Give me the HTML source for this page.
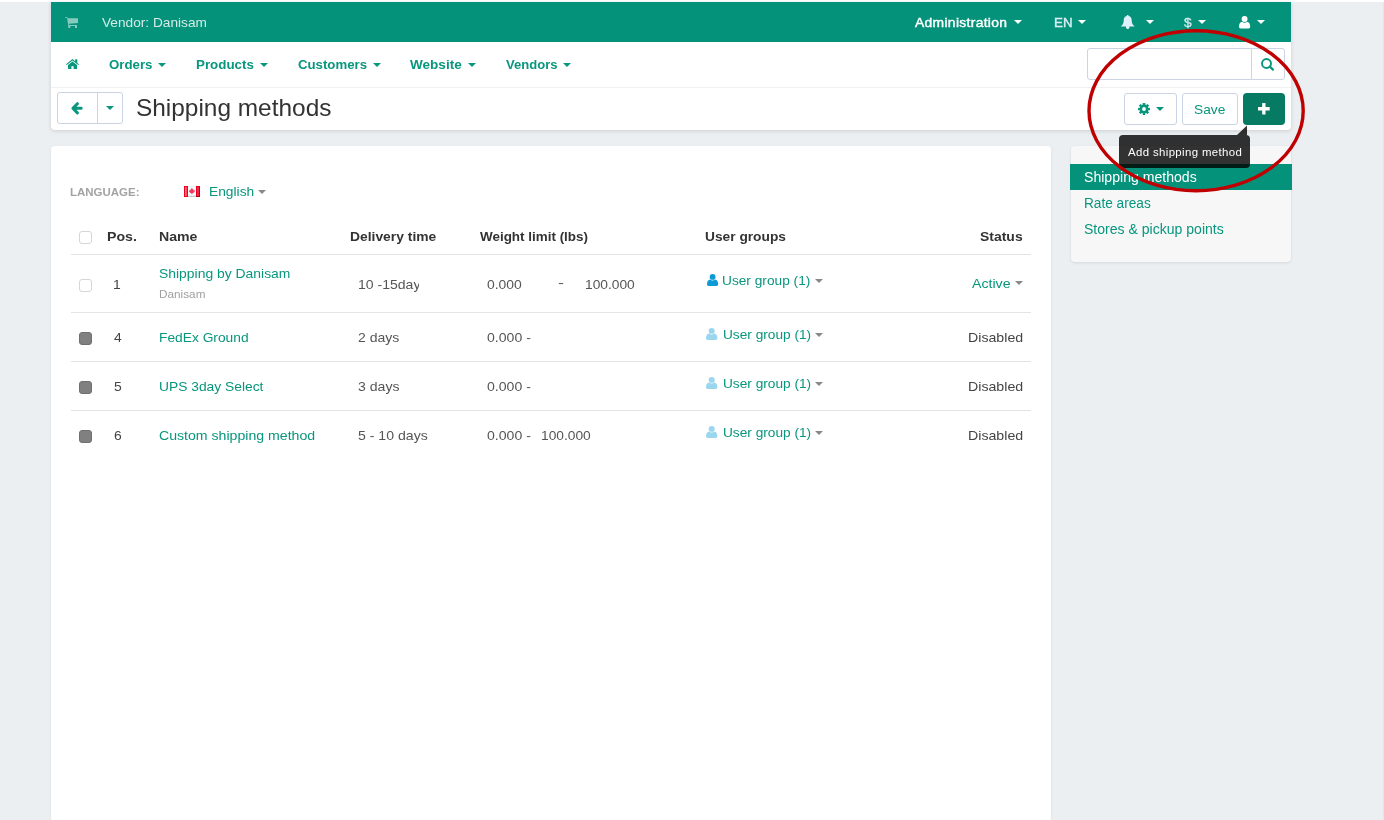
<!DOCTYPE html>
<html>
<head>
<meta charset="utf-8">
<title>Shipping methods</title>
<style>
*{box-sizing:border-box;margin:0;padding:0}
html,body{width:1384px;height:820px;overflow:hidden}
body{background:#ebeff2;font-family:"Liberation Sans",sans-serif;font-size:13px;color:#333;position:relative}
.abs{position:absolute}
.t{position:absolute;white-space:nowrap;line-height:1;transform-origin:0 50%}
#txt{position:absolute;left:0;top:0;width:1384px;height:820px;will-change:transform}
#topstrip{left:0;top:0;width:1384px;height:2px;background:#fff}
#rightstrip{left:1383px;top:2px;width:1px;height:818px;background:#e6e6e6}
#hdrwrap{left:51px;top:2px;width:1240px;height:128px;background:#fff;border-radius:0 0 4px 4px;box-shadow:0 1px 4px rgba(0,0,0,.13)}
#green{left:51px;top:2px;width:1240px;height:40px;background:#05927a}
#sep{left:51px;top:87px;width:1240px;height:1px;background:#f1f1f1}
.btn{position:absolute;background:#fff;border:1px solid #cad4e2;border-radius:3px}
.vsep{position:absolute;width:1px;background:#ccd6e3}
#main{left:51px;top:146px;width:1000px;height:700px;background:#fff;border-radius:4px;box-shadow:0 1px 3px rgba(0,0,0,.08)}
#side{left:1071px;top:146px;width:220px;height:116px;background:#f7f7f7;border-radius:4px;box-shadow:0 1px 3px rgba(0,0,0,.1)}
#sideact{left:1070px;top:164px;width:222px;height:26px;background:#05927a}
.hr{position:absolute;left:71px;width:960px;height:1px;background:#e4e4e4}
.cb{position:absolute;width:13px;height:13px;border-radius:3px}
.cb.off{background:#fff;border:1px solid #d6d6d6}
.cb.on{background:#808080;border:1px solid #707070}
svg{position:absolute;overflow:visible}
.car{position:absolute;width:0;height:0;border-left:4px solid transparent;border-right:4px solid transparent;border-top:4px solid #fff}
.car.g{border-top-color:#08967d}
.car.k{border-top-color:#888}
</style>
</head>
<body>
<div class="abs" id="topstrip"></div>
<div class="abs" id="rightstrip"></div>
<div class="abs" id="hdrwrap"></div>
<div class="abs" id="green"></div>
<div class="abs" id="sep"></div>

<!-- top bar icons -->
<svg id="cart" style="left:65px;top:17px" width="13" height="11" viewBox="0 0 13 11"><path d="M0 0.2 H2.4 L2.9 1.3 H13 V5.9 L4 6.7 L4.2 7.9 H12 V11 H10 V9 H5.3 V11 H3.3 V8.5 L2.1 1.1 H0 Z" fill="rgba(255,255,255,.52)"/></svg>
<div class="car" style="left:1014px;top:20px"></div>
<div class="car" style="left:1078px;top:20px"></div>
<svg id="bell" style="left:1121px;top:14.5px" width="13.4" height="14" viewBox="0 0 13.4 14"><path d="M6.7 0 C7.3 0 7.7 .4 7.7 1 C9.7 1.5 10.7 3.2 10.7 5.4 C10.7 8.4 11.9 9.8 13.4 11 V11.6 H0 V11 C1.5 9.8 2.7 8.4 2.7 5.4 C2.7 3.2 3.7 1.5 5.7 1 C5.7 .4 6.1 0 6.7 0 Z M5 11.5 H8.4 V12.2 C8.4 13.2 7.7 14 6.7 14 C5.7 14 5 13.2 5 12.2 Z" fill="#def0fb"/></svg>
<div class="car" style="left:1146px;top:20px"></div>
<div class="car" style="left:1198px;top:20px"></div>
<svg id="user" style="left:1238.9px;top:15.6px" width="11.2" height="12.4" viewBox="0 0 11.8 12.8" preserveAspectRatio="none"><circle cx="5.9" cy="3.1" r="3.1" fill="#fff"/><path d="M0 11 C0 8.2 1.2 6.2 3.2 5.9 C4 6.6 4.9 6.9 5.9 6.9 C6.9 6.9 7.8 6.6 8.6 5.9 C10.6 6.2 11.8 8.2 11.8 11 C11.8 12.1 11 12.8 10 12.8 H1.8 C.8 12.8 0 12.1 0 11 Z" fill="#fff"/></svg>
<div class="car" style="left:1257px;top:20px"></div>

<!-- menu icons -->
<svg id="home" style="left:66px;top:58.7px" width="13" height="10.1" viewBox="0 0 13 10.4" preserveAspectRatio="none"><path d="M6.5 0 L9.2 2.3 V.3 H11.3 V4.1 L13 5.5 L12.3 6.3 L6.5 1.5 L.7 6.3 L0 5.5 Z" fill="#08967d"/><path d="M6.5 2.5 L11 6.2 V10.4 H7.6 V7.4 H5.4 V10.4 H2 V6.2 Z" fill="#08967d"/></svg>
<div class="car g" style="left:158px;top:63.3px"></div>
<div class="car g" style="left:260px;top:63.3px"></div>
<div class="car g" style="left:373.2px;top:63.3px"></div>
<div class="car g" style="left:468.2px;top:63.3px"></div>
<div class="car g" style="left:563.3px;top:63.3px"></div>

<!-- search -->
<div class="btn" id="search" style="left:1087px;top:48px;width:198px;height:32px"></div>
<div class="vsep" style="left:1251px;top:49px;height:30px"></div>
<svg id="mag" style="left:1261.3px;top:58px" width="13.5" height="13" viewBox="0 0 13.5 13"><circle cx="5.5" cy="5.5" r="4.5" fill="none" stroke="#08967d" stroke-width="1.9"/><path d="M8.8 8.6 L11.9 11.6" stroke="#08967d" stroke-width="2.2" stroke-linecap="round"/></svg>

<!-- title row -->
<div class="btn" id="backgrp" style="left:57px;top:92px;width:66px;height:32px"></div>
<div class="vsep" style="left:97px;top:93px;height:30px"></div>
<svg id="arrow" style="left:71.4px;top:102.4px" width="11.8" height="12.6" viewBox="0 0 11.8 12.6"><path d="M6.4 1.7 L1.9 6.3 L6.4 10.9 M2.2 6.3 H10.2" fill="none" stroke="#08967d" stroke-width="3" stroke-linecap="round" stroke-linejoin="round"/></svg>
<div class="car g" style="left:106px;top:106px"></div>

<div class="btn" id="gearbtn" style="left:1124px;top:93px;width:53px;height:32px"></div>
<svg id="gear" style="left:1138.2px;top:102.9px" width="12" height="12" viewBox="-6.3 -6.3 12.6 12.6"><g fill="#08967d"><circle r="4.6"/><g id="teeth"><rect x="-1.35" y="-6.3" width="2.7" height="12.6" rx=".5"/><rect x="-1.35" y="-6.3" width="2.7" height="12.6" rx=".5" transform="rotate(45)"/><rect x="-1.35" y="-6.3" width="2.7" height="12.6" rx=".5" transform="rotate(90)"/><rect x="-1.35" y="-6.3" width="2.7" height="12.6" rx=".5" transform="rotate(135)"/></g></g><circle r="2" fill="#fff"/></svg>
<div class="car g" style="left:1156px;top:107px"></div>
<div class="btn" id="savebtn" style="left:1182px;top:93px;width:56px;height:32px"></div>
<div class="abs" id="plusbtn" style="left:1243px;top:93px;width:42px;height:32px;background:#067a63;border-radius:4px"></div>
<svg id="plus" style="left:1258.1px;top:103.1px" width="11.7" height="11.5" viewBox="0 0 12 12" preserveAspectRatio="none"><path d="M4.3 0 H7.7 V4.3 H12 V7.7 H7.7 V12 H4.3 V7.7 H0 V4.3 H4.3 Z" fill="#fff"/></svg>

<!-- panels -->
<div class="abs" id="main"></div>
<div class="abs" id="side"></div>
<div class="abs" id="sideact"></div>

<!-- language -->
<svg id="flag" style="left:184px;top:186px" width="16" height="11" viewBox="0 0 16 11" shape-rendering="crispEdges"><rect x="4" width="8" height="11" fill="#f8fbfb"/><rect x="4" y="0" width="8" height="1" fill="#f1f3f3"/><rect x="4" y="10" width="8" height="1" fill="#c9cbcb"/><rect x="4" y="9" width="8" height="1" fill="#ececec"/><rect width="4" height="11" fill="#f4001f"/><rect x="1" y="1" width="2" height="9" fill="#ff6b80"/><rect x="2" y="1" width="1" height="9" fill="#ff4d66"/><rect x="12" width="4" height="11" fill="#e4001c"/><rect x="13" y="1" width="2" height="9" fill="#f2254a"/><rect x="15" y="1" width="1" height="10" fill="#c40016"/><rect x="12" y="10" width="4" height="1" fill="#b80014"/><path shape-rendering="auto" d="M7.9 1.8 L8.7 3.3 L9.4 3.1 L9.3 4.4 L11 4.2 L10.6 5.8 L9 7.2 L8.2 7.4 L8.2 8.2 H7.6 L7.6 7.4 L6.8 7.2 L5.2 5.8 L4.9 4.2 L6.5 4.4 L6.4 3.1 L7.1 3.3 Z" fill="#f2385a"/></svg>
<div class="car k" style="left:258px;top:190px"></div>

<!-- table chrome -->
<div class="cb off" style="left:79px;top:231px"></div>
<div class="hr" style="top:254px"></div>
<div class="hr" style="top:312px"></div>
<div class="hr" style="top:361px"></div>
<div class="hr" style="top:410px"></div>
<div class="cb off" style="left:79px;top:279px"></div>
<div class="cb on" style="left:79px;top:332px"></div>
<div class="cb on" style="left:79px;top:381px"></div>
<div class="cb on" style="left:79px;top:430px"></div>

<!-- user group icons + carets -->
<svg class="ug" style="left:706.9px;top:274px" width="11.2" height="12" viewBox="0 0 11.8 12.8" preserveAspectRatio="none"><circle cx="5.9" cy="3.1" r="3.1" fill="#0d9ad6"/><path d="M0 11 C0 8.2 1.2 6.2 3.2 5.9 C4 6.6 4.9 6.9 5.9 6.9 C6.9 6.9 7.8 6.6 8.6 5.9 C10.6 6.2 11.8 8.2 11.8 11 C11.8 12.1 11 12.8 10 12.8 H1.8 C.8 12.8 0 12.1 0 11 Z" fill="#0d9ad6"/></svg>
<svg class="ug" style="left:706.4px;top:328.1px" width="11.4" height="11.9" viewBox="0 0 11.8 12.8" preserveAspectRatio="none"><circle cx="5.9" cy="3.1" r="3.1" fill="#9ad6ee"/><path d="M0 11 C0 8.2 1.2 6.2 3.2 5.9 C4 6.6 4.9 6.9 5.9 6.9 C6.9 6.9 7.8 6.6 8.6 5.9 C10.6 6.2 11.8 8.2 11.8 11 C11.8 12.1 11 12.8 10 12.8 H1.8 C.8 12.8 0 12.1 0 11 Z" fill="#9ad6ee"/></svg>
<svg class="ug" style="left:706.4px;top:377.1px" width="11.4" height="11.9" viewBox="0 0 11.8 12.8" preserveAspectRatio="none"><circle cx="5.9" cy="3.1" r="3.1" fill="#9ad6ee"/><path d="M0 11 C0 8.2 1.2 6.2 3.2 5.9 C4 6.6 4.9 6.9 5.9 6.9 C6.9 6.9 7.8 6.6 8.6 5.9 C10.6 6.2 11.8 8.2 11.8 11 C11.8 12.1 11 12.8 10 12.8 H1.8 C.8 12.8 0 12.1 0 11 Z" fill="#9ad6ee"/></svg>
<svg class="ug" style="left:706.4px;top:426.1px" width="11.4" height="11.9" viewBox="0 0 11.8 12.8" preserveAspectRatio="none"><circle cx="5.9" cy="3.1" r="3.1" fill="#9ad6ee"/><path d="M0 11 C0 8.2 1.2 6.2 3.2 5.9 C4 6.6 4.9 6.9 5.9 6.9 C6.9 6.9 7.8 6.6 8.6 5.9 C10.6 6.2 11.8 8.2 11.8 11 C11.8 12.1 11 12.8 10 12.8 H1.8 C.8 12.8 0 12.1 0 11 Z" fill="#9ad6ee"/></svg>
<div class="car k" style="left:815.2px;top:279px"></div>
<div class="car k" style="left:814.9px;top:333px"></div>
<div class="car k" style="left:814.9px;top:382px"></div>
<div class="car k" style="left:814.9px;top:431px"></div>
<div class="car k" style="left:1015.2px;top:281px"></div>

<!-- tooltip bg -->
<div class="abs" id="tip" style="left:1119px;top:135px;width:131px;height:33px;background:rgba(0,0,0,.8);border-radius:4px"></div>
<svg id="tiparrow" style="left:1237px;top:125px" width="10" height="10"><path d="M0 10 L10 0.5 L10 10 Z" fill="rgba(0,0,0,.8)"/></svg>

<div id="txt">
<div class="t" id="vendor" style="left:102.00px;top:16px;font-size:13.5px;color:#d4ece7;transform:scaleX(1.0129);">Vendor: Danisam</div>
<div class="t" id="admin" style="left:915.00px;top:16px;font-size:13px;color:#fff;transform:scaleX(1.0665);-webkit-text-stroke:.4px #fff;letter-spacing:.3px">Administration</div>
<div class="t" id="en" style="left:1054.00px;top:16px;font-size:13px;color:#dceff6;transform:scaleX(1.0253);-webkit-text-stroke:.35px #dceff6">EN</div>
<div class="t" id="dollar" style="left:1184.00px;top:16px;font-size:13px;color:#d5edf0;transform:scaleX(1.0487);-webkit-text-stroke:.3px #d5edf0">$</div>
<div class="t" id="m1" style="left:109.00px;top:58px;font-size:13px;color:#08967d;transform:scaleX(1.0203);font-weight:bold;">Orders</div>
<div class="t" id="m2" style="left:196.00px;top:58px;font-size:13px;color:#08967d;transform:scaleX(1.0259);font-weight:bold;">Products</div>
<div class="t" id="m3" style="left:298.00px;top:58px;font-size:13px;color:#08967d;transform:scaleX(1.0158);font-weight:bold;">Customers</div>
<div class="t" id="m4" style="left:410.00px;top:58px;font-size:13px;color:#08967d;transform:scaleX(1.0424);font-weight:bold;">Website</div>
<div class="t" id="m5" style="left:506.00px;top:58px;font-size:13px;color:#08967d;transform:scaleX(1.0035);font-weight:bold;">Vendors</div>
<div class="t" id="title" style="left:136.00px;top:96px;font-size:24px;color:#333;transform:scaleX(1.0171);">Shipping methods</div>
<div class="t" id="save" style="left:1194.00px;top:103px;font-size:13.5px;color:#08967d;transform:scaleX(1.0170);">Save</div>
<div class="t" id="s1" style="left:1084.00px;top:170px;font-size:14px;color:#fff;transform:scaleX(1.0058);">Shipping methods</div>
<div class="t" id="s2" style="left:1084.00px;top:196px;font-size:14px;color:#08967d;transform:scaleX(0.9742);">Rate areas</div>
<div class="t" id="s3" style="left:1084.00px;top:222px;font-size:14px;color:#08967d;transform:scaleX(1.0033);">Stores &amp; pickup points</div>
<div class="t" id="lang" style="left:70.00px;top:187px;font-size:11px;color:#a3a3a3;transform:scaleX(1.0426);font-weight:bold;">LANGUAGE:</div>
<div class="t" id="english" style="left:209.00px;top:185px;font-size:13.5px;color:#08967d;transform:scaleX(1.0204);">English</div>
<div class="t" id="h1" style="left:107.00px;top:230px;font-size:13px;color:#333;transform:scaleX(1.0873);font-weight:bold;">Pos.</div>
<div class="t" id="h2" style="left:159.00px;top:230px;font-size:13px;color:#333;transform:scaleX(1.0867);font-weight:bold;">Name</div>
<div class="t" id="h3" style="left:350.00px;top:230px;font-size:13px;color:#333;transform:scaleX(1.0657);font-weight:bold;">Delivery time</div>
<div class="t" id="h4" style="left:480.00px;top:230px;font-size:13px;color:#333;transform:scaleX(1.0338);font-weight:bold;">Weight limit (lbs)</div>
<div class="t" id="h5" style="left:705.00px;top:230px;font-size:13px;color:#333;transform:scaleX(1.0572);font-weight:bold;">User groups</div>
<div class="t" id="h6" style="left:980.00px;top:230px;font-size:13px;color:#333;transform:scaleX(1.0733);font-weight:bold;">Status</div>
<div class="t" id="r1p" style="left:113.00px;top:278px;font-size:13px;color:#444;transform:scaleX(1.0700);">1</div>
<div class="t" id="r1n" style="left:159.00px;top:267px;font-size:13px;color:#08967d;transform:scaleX(1.0696);">Shipping by Danisam</div>
<div class="t" id="r1v" style="left:159.00px;top:289px;font-size:11px;color:#a0a0a0;transform:scaleX(1.0701);">Danisam</div>
<div class="t" id="r1d" style="left:358.00px;top:278px;font-size:13px;color:#555;transform:scaleX(1.0799);">10 -15day</div>
<div class="t" id="r1w1" style="left:487.00px;top:278px;font-size:13px;color:#555;transform:scaleX(1.0692);">0.000</div>
<div class="t" id="r1w2" style="left:558.00px;top:276px;font-size:13px;color:#555;transform:scaleX(1.3818);">-</div>
<div class="t" id="r1w3" style="left:585.00px;top:278px;font-size:13px;color:#555;transform:scaleX(1.0594);">100.000</div>
<div class="t" id="r1u" style="left:722.00px;top:274px;font-size:13px;color:#08967d;transform:scaleX(1.0537);">User group (1)</div>
<div class="t" id="r1s" style="left:972.00px;top:277px;font-size:13px;color:#08967d;transform:scaleX(1.0898);">Active</div>
<div class="t" id="r2p" style="left:114.00px;top:331px;font-size:13px;color:#444;transform:scaleX(1.0700);">4</div>
<div class="t" id="r2n" style="left:159.00px;top:331px;font-size:13px;color:#08967d;transform:scaleX(1.0596);">FedEx Ground</div>
<div class="t" id="r2d" style="left:358.00px;top:331px;font-size:13px;color:#555;transform:scaleX(1.0786);">2 days</div>
<div class="t" id="r2w1" style="left:487.00px;top:331px;font-size:13px;color:#555;transform:scaleX(1.0828);">0.000 -</div>
<div class="t" id="r2u" style="left:723.00px;top:328px;font-size:13px;color:#08967d;transform:scaleX(1.0516);">User group (1)</div>
<div class="t" id="r2s" style="left:968.00px;top:331px;font-size:13px;color:#444;transform:scaleX(1.0900);">Disabled</div>
<div class="t" id="r3p" style="left:114.00px;top:380px;font-size:13px;color:#444;transform:scaleX(1.0700);">5</div>
<div class="t" id="r3n" style="left:159.00px;top:380px;font-size:13px;color:#08967d;transform:scaleX(1.0628);">UPS 3day Select</div>
<div class="t" id="r3d" style="left:358.00px;top:380px;font-size:13px;color:#555;transform:scaleX(1.0830);">3 days</div>
<div class="t" id="r3w1" style="left:487.00px;top:380px;font-size:13px;color:#555;transform:scaleX(1.0828);">0.000 -</div>
<div class="t" id="r3u" style="left:723.00px;top:377px;font-size:13px;color:#08967d;transform:scaleX(1.0516);">User group (1)</div>
<div class="t" id="r3s" style="left:968.00px;top:380px;font-size:13px;color:#444;transform:scaleX(1.0900);">Disabled</div>
<div class="t" id="r4p" style="left:114.00px;top:429px;font-size:13px;color:#444;transform:scaleX(1.0700);">6</div>
<div class="t" id="r4n" style="left:159.00px;top:429px;font-size:13px;color:#08967d;transform:scaleX(1.0858);">Custom shipping method</div>
<div class="t" id="r4d" style="left:358.00px;top:429px;font-size:13px;color:#555;transform:scaleX(1.0842);">5 - 10 days</div>
<div class="t" id="r4w1" style="left:487.00px;top:429px;font-size:13px;color:#555;transform:scaleX(1.0828);">0.000 -</div>
<div class="t" id="r4u" style="left:723.00px;top:426px;font-size:13px;color:#08967d;transform:scaleX(1.0516);">User group (1)</div>
<div class="t" id="r4s" style="left:968.00px;top:429px;font-size:13px;color:#444;transform:scaleX(1.0900);">Disabled</div>
<div class="t" id="r4w3" style="left:541.00px;top:429px;font-size:13px;color:#555;transform:scaleX(1.0594);">100.000</div>
<div class="t" id="tiptext" style="left:1128.00px;top:147px;font-size:11px;color:#fff;transform:scaleX(1.0381);z-index:5;letter-spacing:.35px">Add shipping method</div>
</div>
<div class="abs" id="clip1" style="left:419.2px;top:272px;width:12px;height:24px;background:#fff"></div>

<!-- red ellipse -->
<svg id="ellipse" style="left:0;top:0;z-index:10" width="1384" height="820"><ellipse cx="1196.1" cy="110.8" rx="107.1" ry="80" fill="none" stroke="#c00000" stroke-width="3.4"/></svg>
</body>
</html>
